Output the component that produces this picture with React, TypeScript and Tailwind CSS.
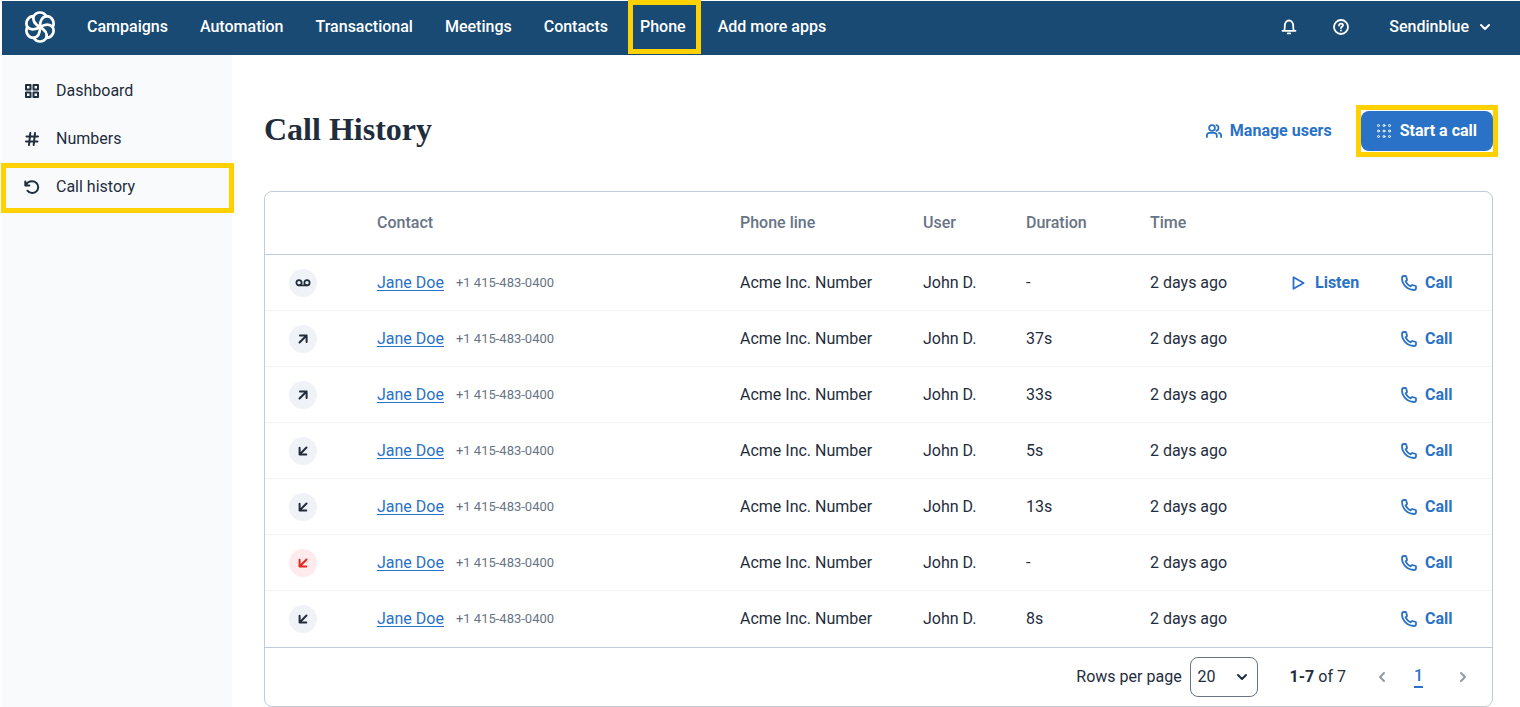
import type { ReactNode } from "react";

type CallType = "voicemail" | "outgoing" | "incoming" | "missed";

const navItems = [
  "Campaigns",
  "Automation",
  "Transactional",
  "Meetings",
  "Contacts",
  "Phone",
  "Add more apps",
];

const calls: { type: CallType; duration: string }[] = [
  { type: "voicemail", duration: "-" },
  { type: "outgoing", duration: "37s" },
  { type: "outgoing", duration: "33s" },
  { type: "incoming", duration: "5s" },
  { type: "incoming", duration: "13s" },
  { type: "missed", duration: "-" },
  { type: "incoming", duration: "8s" },
];

const Icon = ({
  children,
  className = "size-4",
  width = 2,
}: {
  children: ReactNode;
  className?: string;
  width?: number;
}) => (
  <svg
    viewBox="0 0 16 16"
    fill="none"
    stroke="currentColor"
    strokeWidth={width}
    strokeLinecap="round"
    strokeLinejoin="round"
    className={`shrink-0 ${className}`}
    aria-hidden="true"
  >
    {children}
  </svg>
);

const Logo = () => (
  <svg
    viewBox="-16 -16 32 32"
    fill="none"
    stroke="currentColor"
    strokeWidth="2.7"
    strokeLinecap="round"
    className="size-8"
    aria-hidden="true"
  >
    {[0, 60, 120, 180, 240, 300].map((angle) => (
      <path
        key={angle}
        transform={`rotate(${angle})`}
        d="M6.3 -10.9A7.3 7.3 0 0 0 -6.3 -10.9C-7.6 -7 -5.4 -3 0 0"
      />
    ))}
  </svg>
);

const PhoneIcon = () => (
  <Icon width={1.8}>
    <path d="M1 3.1C1 1.9 1.9 1 3.1 1h1.2c.4 0 .8.3.9.7l.8 2.7c.1.4 0 .8-.3 1L4.6 6.4c1 2.2 2.8 4 5 5l1-1.1c.3-.3.7-.4 1-.3l2.7.8c.4.1.7.5.7.9v1.2c0 1.2-.9 2.1-2.1 2.1C6.5 15 1 9.5 1 3.1z" />
  </Icon>
);

const CallTypeIcon = ({ type }: { type: CallType }) => {
  const color =
    type === "missed"
      ? "bg-[#ffebed] text-[#e6281e]"
      : "bg-[#eff2f7] text-[#1f2d3d]";
  return (
    <span
      role="img"
      aria-label={type}
      className={`flex size-7 items-center justify-center rounded-full ${color}`}
    >
      {type === "voicemail" && (
        <Icon width={1.8}>
          <circle cx="4" cy="7.7" r="2.6" />
          <circle cx="12" cy="7.7" r="2.6" />
          <path d="M4 10.3h8" />
        </Icon>
      )}
      {type === "outgoing" && (
        <Icon>
          <path d="M4.5 11.5L11.3 4.7M5 4.5h6.6v6.6" />
        </Icon>
      )}
      {(type === "incoming" || type === "missed") && (
        <Icon>
          <path d="M11.5 4.5L4.8 11.2M4.6 4.8v6.7h6.7" />
        </Icon>
      )}
    </span>
  );
};

const Highlight = ({ className }: { className: string }) => (
  <span
    className={`pointer-events-none absolute border-[5px] border-[#ffd100] ${className}`}
  />
);

const Header = () => (
  <header className="flex h-[54px] items-center bg-[#184a73] pr-[27px] pb-0.5 pl-[22px] text-white">
    <a href="#home" aria-label="Sendinblue home">
      <Logo />
    </a>
    <nav className="ml-[31px] flex h-full gap-8 font-medium">
      {navItems.map((item) => (
        <a key={item} href="#app" className="relative flex items-center">
          {item}
          {item === "Phone" && (
            <Highlight className="-top-px -right-[15px] -bottom-px -left-3" />
          )}
        </a>
      ))}
    </nav>
    <div className="ml-auto flex items-center font-medium">
      <button type="button" aria-label="Notifications">
        <Icon width={1.8}>
          <path d="M1.5 11.8h13M3.2 11.5c.6-1 .6-2.2.6-4.5C3.8 3.800 5.500 1.500 8 1.500s4.200 2.300 4.200 5.500c0 2.300 0 3.500.6 4.500M6.800 14.400h2.400" />
        </Icon>
      </button>
      <button type="button" aria-label="Help" className="ml-9">
        <Icon width={1.8}>
          <circle cx="8" cy="8" r="7" />
          <path d="M6 6.500c0-1.200.9-1.900 2-1.900s2 .7 2 1.700c0 1.300-2 1.500-2 2.700M8 11.400v.1" />
        </Icon>
      </button>
      <button type="button" className="ml-10 flex items-center gap-2">
        Sendinblue
        <Icon>
          <path d="M4 6l4 4 4-4" />
        </Icon>
      </button>
    </div>
  </header>
);

const Sidebar = () => (
  <aside className="w-[230px] shrink-0 bg-[#f9fafc] pt-3">
    <nav>
      <a href="#dashboard" className="flex h-12 items-center gap-4 pl-[22px]">
        <Icon>
          <path d="M2 2h4.500v4.500H2zM9.500 2H14v4.500H9.500zM2 9.500h4.500V14H2zM9.500 9.500H14V14H9.500z" />
        </Icon>
        Dashboard
      </a>
      <a href="#numbers" className="flex h-12 items-center gap-4 pl-[22px]">
        <Icon>
          <path d="M2.500 5.500h11.500M2 10.500h11.500M6.300 2L5 14M11 2L9.700 14" />
        </Icon>
        Numbers
      </a>
      <a
        href="#history"
        className="relative flex h-12 items-center gap-4 pl-[22px]"
      >
        <Icon>
          <path d="M1.300 2.500v4h4M1.700 6.300C2.700 3.900 5.300 2.300 8.200 2.300c3.300 0 6 2.600 6 5.900s-2.700 5.900-6 5.900c-2 0-3.700-.9-4.800-2.400" />
        </Icon>
        Call history
        <Highlight className="top-0 -right-0.5 -bottom-0.5 -left-px" />
      </a>
    </nav>
  </aside>
);

const Pagination = () => (
  <div className="flex items-center justify-end border-t border-[#c0ccda] py-[9px] pr-[21px]">
    <label htmlFor="rows">Rows per page</label>
    <div className="relative ml-2">
      <select
        id="rows"
        className="h-10 w-[68px] appearance-none rounded-lg border border-[#687484] bg-white pl-[7px]"
      >
        <option>20</option>
      </select>
      <Icon className="pointer-events-none absolute top-3 right-2 size-4">
        <path d="M4 6l4 4 4-4" />
      </Icon>
    </div>
    <p className="ml-8">
      <b>1-7</b> of 7
    </p>
    <button
      type="button"
      aria-label="Previous page"
      className="ml-7 text-[#8f99a6]"
    >
      <Icon>
        <path d="M10 4L6 8l4 4" />
      </Icon>
    </button>
    <a
      href="#page-1"
      className="ml-6 border-b-2 border-[#2a72c8] leading-5 font-medium text-[#2a72c8]"
    >
      1
    </a>
    <button type="button" aria-label="Next page" className="ml-8 text-[#8f99a6]">
      <Icon>
        <path d="M6 4l4 4-4 4" />
      </Icon>
    </button>
  </div>
);

const CallTable = () => (
  <div className="rounded-lg border border-[#c0ccda]">
    <table className="w-full table-fixed border-separate border-spacing-0 text-left">
      <thead>
        <tr className="h-[63px] text-[#687484] *:border-b *:border-[#c0ccda]">
          <td className="w-[88px]"></td>
          <th className="pl-6 font-medium">Contact</th>
          <th className="w-[183px] pl-6 font-medium">Phone line</th>
          <th className="w-[103px] pl-6 font-medium">User</th>
          <th className="w-[124px] pl-6 font-medium">Duration</th>
          <th className="w-[141px] pl-6 font-medium">Time</th>
          <td className="w-[110px]"></td>
          <td className="w-[115px]"></td>
        </tr>
      </thead>
      <tbody>
        {calls.map((call, index) => (
          <tr
            key={index}
            className="h-14 *:border-b *:border-[#eff2f7] last:*:border-transparent"
          >
            <td className="pl-6">
              <CallTypeIcon type={call.type} />
            </td>
            <td className="pl-6">
              <div className="flex items-center gap-3">
                <a
                  href="#contact"
                  className="text-[#2a72c8] underline underline-offset-2"
                >
                  Jane Doe
                </a>
                <span className="text-[13px] text-[#687484]">
                  +1 415-483-0400
                </span>
              </div>
            </td>
            <td className="pl-6">Acme Inc. Number</td>
            <td className="pl-6">John D.</td>
            <td className="pl-6">{call.duration}</td>
            <td className="pl-6">2 days ago</td>
            <td className="pl-6">
              {call.type === "voicemail" && (
                <button
                  type="button"
                  className="flex items-center gap-2 font-bold text-[#2a72c8]"
                >
                  <Icon width={1.8}>
                    <path d="M2.500 2.200v11.600L12.600 8z" />
                  </Icon>
                  Listen
                </button>
              )}
            </td>
            <td className="pl-6">
              <button
                type="button"
                className="flex items-center gap-2 font-bold text-[#2a72c8]"
              >
                <PhoneIcon />
                Call
              </button>
            </td>
          </tr>
        ))}
      </tbody>
    </table>
    <Pagination />
  </div>
);

const App = () => {
  return (
    <div className="flex min-h-screen flex-col bg-white pt-px pl-0.5 font-[Roboto,sans-serif] text-base text-[#1f2d3d]">
      <Header />
      <div className="flex grow">
        <Sidebar />
        <main className="min-w-0 grow pt-14 pr-[27px] pl-8">
          <div className="mb-10 flex h-10 items-center">
            <h1 className="pb-1 font-['Liberation_Serif',serif] text-[32px] leading-10 font-bold">
              Call History
            </h1>
            <button
              type="button"
              className="mr-[29px] ml-auto flex items-center gap-2 font-bold text-[#2a72c8]"
            >
              <Icon width={1.8}>
                <circle cx="6" cy="5" r="2.9" />
                <path d="M.9 14v-1.500C.9 10.800 2 9.800 3.500 9.800h4.600c1.600 0 2.700 1 2.700 2.700V14M10.300 2.200c1.300.2 2.200 1.400 2.200 2.800s-.9 2.500-2.200 2.800M13 10c1.300.3 2.100 1.200 2.100 2.500V14" />
              </Icon>
              Manage users
            </button>
            <button
              type="button"
              className="relative flex h-10 items-center gap-2 rounded-lg bg-[#2a72c8] pr-4 pl-[15px] font-bold text-white"
            >
              <Icon width={1}>
                {[2.500, 8, 13.500].map((y) =>
                  [2.500, 8, 13.500].map((x) => (
                    <circle key={`${x}-${y}`} cx={x} cy={y} r="1" />
                  )),
                )}
              </Icon>
              Start a call
              <Highlight className="-inset-x-[5px] -inset-y-1.5" />
            </button>
          </div>
          <CallTable />
        </main>
      </div>
    </div>
  );
};

export default App;
